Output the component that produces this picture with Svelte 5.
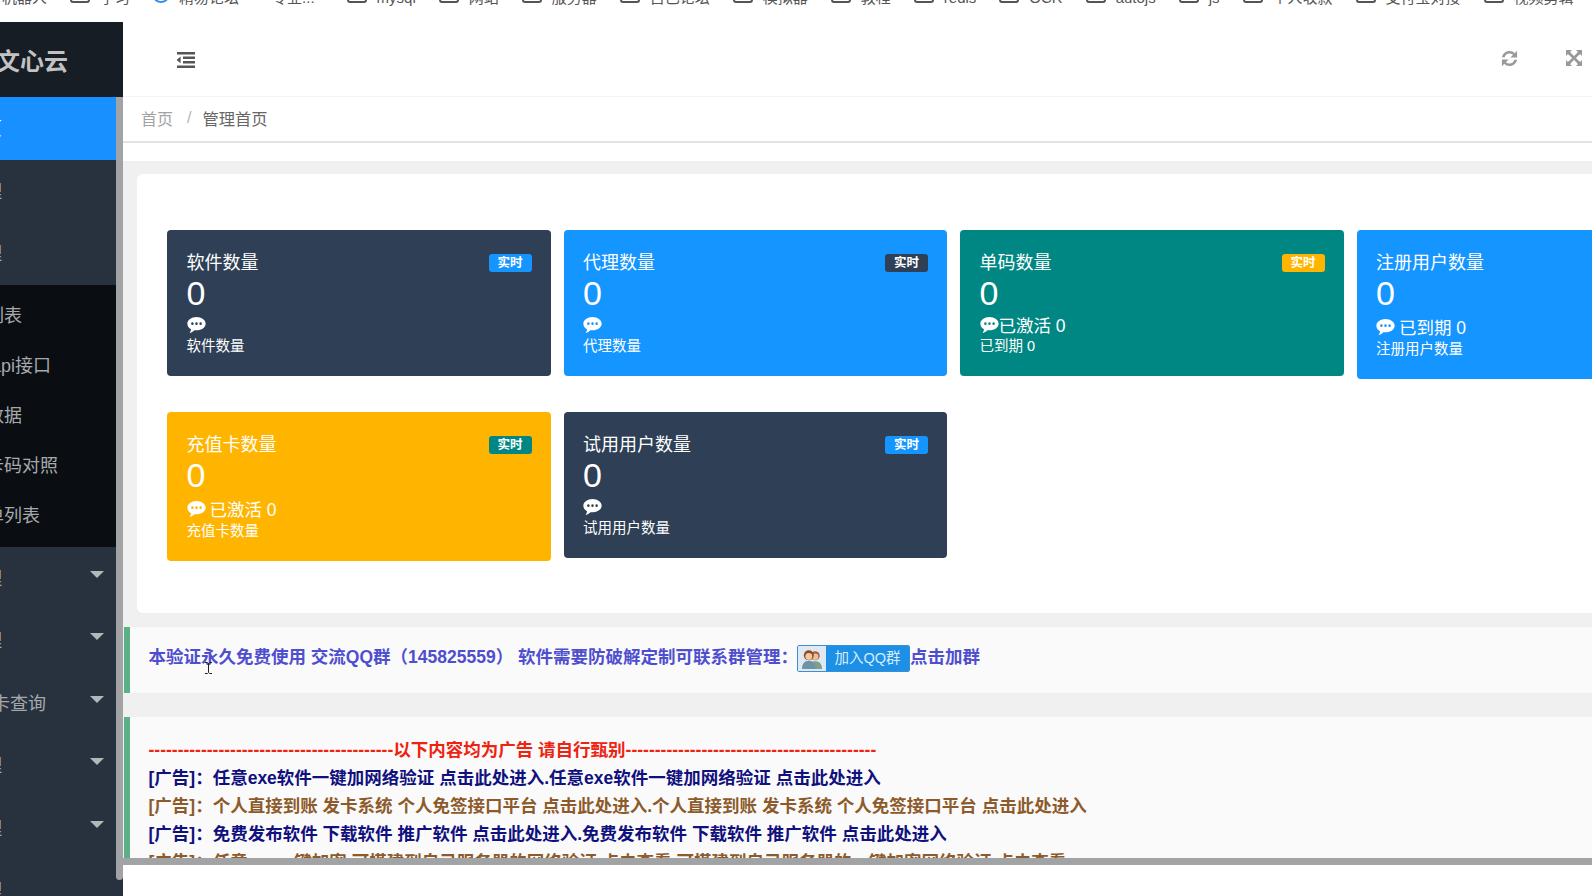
<script>
  // bookmarks strip along the top; kind: folder | site | blank
  const bookmarks = [
    { label: "机器人", kind: "none" },
    { label: "学习", kind: "folder" },
    { label: "精易论坛", kind: "site" },
    { label: "专业...", kind: "blank" },
    { label: "mysql", kind: "folder" },
    { label: "网站", kind: "folder" },
    { label: "服务器", kind: "folder" },
    { label: "自己论坛", kind: "folder" },
    { label: "模拟器", kind: "folder" },
    { label: "教程", kind: "folder" },
    { label: "redis", kind: "folder" },
    { label: "OCR", kind: "folder" },
    { label: "autojs", kind: "folder" },
    { label: "js", kind: "folder" },
    { label: "个人收款", kind: "folder" },
    { label: "支付宝对接", kind: "folder" },
    { label: "视频剪辑", kind: "folder" },
  ];

  const subItems = ["软件列表", "软件 api接口", "软件数据", "软件卡码对照", "黑名单列表"];

  const lowerItems = [
    { label: "单码管理", caret: true, x: -70 },
    { label: "充值管理", caret: true, x: -70 },
    { label: "充值卡查询", caret: true, x: -44 },
    { label: "用户管理", caret: true, x: -70 },
    { label: "代理管理", caret: true, x: -70 },
    { label: "系统管理", caret: false, x: -70 },
  ];

  const cards = [
    { title: "软件数量", tone: "navy", badge: "blue", msg: "", sub: "软件数量" },
    { title: "代理数量", tone: "blue", badge: "navy", msg: "", sub: "代理数量" },
    { title: "单码数量", tone: "teal", badge: "amber", msg: "已激活 0", sub: "已到期 0" },
    { title: "注册用户数量", tone: "blue", badge: "", msg: "已到期 0", sub: "注册用户数量", big: true },
    { title: "充值卡数量", tone: "amber", badge: "teal", msg: "已激活 0", sub: "充值卡数量", big: true },
    { title: "试用用户数量", tone: "navy", badge: "blue", msg: "", sub: "试用用户数量" },
  ];

  const ads = [
    { tone: "navy", text: "[广告]：任意exe软件一键加网络验证 点击此处进入.任意exe软件一键加网络验证 点击此处进入" },
    { tone: "brown", text: "[广告]：个人直接到账 发卡系统 个人免签接口平台 点击此处进入.个人直接到账 发卡系统 个人免签接口平台 点击此处进入" },
    { tone: "navy", text: "[广告]：免费发布软件 下载软件 推广软件 点击此处进入.免费发布软件 下载软件 推广软件 点击此处进入" },
    { tone: "brown", text: "[广告]：任意exe一键加密 可搭建到自己服务器的网络验证 点击查看 可搭建到自己服务器的一键加密网络验证 点击查看" },
  ];
</script>

<div class="page">
  <div class="bookmarks">
    {#each bookmarks as b}
      <div class="bookmark" class:spaced={b.kind === "blank"}>
        {#if b.kind === "folder"}
          <span class="folder"></span>
        {:else if b.kind === "site"}
          <span class="site"></span>
        {:else if b.kind === "blank"}
          <span class="blank"></span>
        {/if}
        <span>{b.label}</span>
      </div>
    {/each}
  </div>

  <div class="shell">
    <aside class="sidebar">
      <div class="logo"><span>文心云</span></div>
      <div class="nav-item active"><span class="label">管理首页</span></div>
      <div class="nav-item"><span class="label">软件管理</span></div>
      <div class="nav-item"><span class="label">软件管理</span></div>
      <div class="submenu">
        {#each subItems as s}
          <div class="sub-item"><span class="sub-label">{s}</span></div>
        {/each}
      </div>
      {#each lowerItems as item}
        <div class="nav-item">
          <span class="label" style="margin-left: {item.x}px">{item.label}</span>
          {#if item.caret}<span class="caret"></span>{/if}
        </div>
      {/each}
      <div class="thumb"></div>
    </aside>

    <main class="main">
      <div class="scroll">
        <header class="topbar">
          <svg class="dedent" viewBox="0 0 19 16" width="19" height="16" aria-hidden="true">
            <path fill="#555" d="M1 0h18v2.6H1zM7 4.4h12V7H7zM7 8.9h12v2.6H7zM1 13.4h18V16H1zM4.6 4.6v6.6L0.6 7.9z" />
          </svg>
          <span class="spacer"></span>
          <svg class="refresh" viewBox="1.5 1.5 13 13" width="17" height="17" aria-hidden="true">
            <path fill="#999" d="M8 2.2c1.6 0 3 .6 4 1.7L13.800 2.100V7.200H8.700l2-2c-.7-.7-1.700-1.100-2.700-1.100-1.800 0-3.300 1.200-3.700 2.900H2.200C2.700 4.200 5.100 2.200 8 2.200zM2.200 8.800h5.100l-2 2c.7.7 1.700 1.100 2.700 1.100 1.800 0 3.300-1.200 3.700-2.900h2.100c-.5 2.800-2.900 4.800-5.800 4.800-1.600 0-3-.6-4-1.700l-1.800 1.800z" />
          </svg>
          <svg class="expand" viewBox="0 0 16 16" width="16" height="16" aria-hidden="true">
            <path fill="#999" d="M0 0h6L4 2l1 1-2 2-1-1-2 2zM16 0v6l-2-2-1 1-2-2 1-1-2-2zM0 16v-6l2 2 1-1 2 2-1 1 2 2zM16 16h-6l2-2-1-1 2-2 1 1 2-2z" />
            <path stroke="#999" stroke-width="2.600" d="M3 3l10 10M13 3L3 13" />
          </svg>
        </header>

        <nav class="crumbs">
          <span class="crumb-link">首页</span>
          <span class="crumb-sep">/</span>
          <span class="crumb-now">管理首页</span>
        </nav>

        <div class="body">
          <section class="panel">
            <div class="grid">
              {#each cards as c}
                <article class="card {c.tone}">
                  <div class="title-row">
                    <span class="title">{c.title}</span>
                    {#if c.badge}<span class="badge {c.badge}">实时</span>{/if}
                  </div>
                  <div class="count">0</div>
                  <div class="msg" class:big={c.big}>
                    <svg class="bubble" viewBox="0 0 16 14" width="19" height="16" aria-hidden="true">
                      <path
                        fill="#fff"
                        fill-rule="evenodd"
                        d="M8 0c4.400 0 8 2.600 8 5.800s-3.600 5.800-8 5.800c-.6 0-1.200-.1-1.800-.1C5 12.600 3.400 13.600 1.900 14c.7-.9 1.200-1.900 1.300-3.300C1.300 9.600 0 7.800 0 5.800 0 2.600 3.600 0 8 0zM4.400 4.700a1.100 1.100 0 1 0 0 2.200 1.100 1.100 0 0 0 0-2.200zM8 4.700a1.100 1.100 0 1 0 0 2.200 1.100 1.100 0 0 0 0-2.200zM11.600 4.700a1.100 1.100 0 1 0 0 2.200 1.100 1.100 0 0 0 0-2.200z"
                      />
                    </svg>
                    {#if c.msg}<span class="msg-text" class:pad={c.big}>{c.msg}</span>{/if}
                  </div>
                  <div class="sub">{c.sub}</div>
                </article>
              {/each}
            </div>
          </section>

          <section class="notice first">
            <span>本验证永久免费使用 交流QQ群（145825559） 软件需要防破解定制可联系群管理：</span>
            <span class="qq-btn">
              <span class="qq-face">
                <svg viewBox="0 0 24 22" width="24" height="22" aria-hidden="true">
                  <circle cx="15.500" cy="7.500" r="5" fill="#a5603a" />
                  <circle cx="15.500" cy="8.500" r="3.500" fill="#eec09a" />
                  <path d="M8 22c0-6 3-8.500 7.500-8.500S23 16 23 22z" fill="#7f9f8f" />
                  <circle cx="8.500" cy="7" r="5.500" fill="#8a4a2a" />
                  <circle cx="8.500" cy="8.200" r="3.800" fill="#f2c8a2" />
                  <path d="M1 22c0-6 3-9 7.500-9s7.500 3 7.500 9z" fill="#6f93a5" />
                </svg>
              </span>
              <span class="qq-text">加入QQ群</span>
            </span>
            <span>点击加群</span>
            <svg class="ibeam" viewBox="0 0 7 12" width="7" height="12" aria-hidden="true">
              <path fill="none" stroke="#222" stroke-width="1" d="M0 .5h2.500l1 1 1-1H7M3.500 1.500v9M0 11.500h2.500l1-1 1 1H7" />
            </svg>
          </section>

          <section class="notice ads">
            <div class="ad red">{"-".repeat(42)}以下内容均为广告 请自行甄别{"-".repeat(43)}</div>
            {#each ads as ad}
              <div class="ad {ad.tone}">{ad.text}</div>
            {/each}
          </section>
        </div>
      </div>
      <div class="hbar"></div>
    </main>
  </div>
</div>

<style>
  :global(body) {
    margin: 0;
    overflow: hidden;
    background: #fff;
  }

  .page {
    width: 1592px;
    height: 896px;
    overflow: hidden;
    font-family: "Liberation Sans", "Noto Sans CJK SC", sans-serif;
  }

  .bookmarks {
    height: 22px;
    overflow: hidden;
    display: flex;
    align-items: flex-start;
    gap: 23px;
    padding-left: 2px;
    font-size: 15px;
    color: #555;
  }

  .bookmark {
    display: flex;
    align-items: flex-end;
    gap: 10px;
    margin-top: -13px;
    height: 22px;
    line-height: 22px;
    white-space: nowrap;
  }
  .bookmark.spaced { padding-right: 9px; }

  .folder {
    width: 20px;
    height: 14px;
    margin-bottom: 6px;
    box-sizing: border-box;
    border: 2px solid #555;
    border-radius: 3px;
  }
  .site {
    width: 16px;
    height: 14px;
    margin-bottom: 6px;
    box-sizing: border-box;
    border: 2px solid #3b8fe0;
    border-radius: 50%;
  }
  .blank { width: 0; }

  .shell {
    display: flex;
    height: 874px;
  }

  .sidebar {
    position: relative;
    flex: 0 0 122.5px;
    overflow: hidden;
    background: #27323e;
    color: #a6a9ac;
    font-size: 18px;
    white-space: nowrap;
  }

  .logo {
    height: 75px;
    display: flex;
    align-items: center;
    background: #171d24;
    color: #c2c2c2;
    font-size: 24px;
    font-weight: 700;
  }
  .logo span { margin-left: -4px; }

  .nav-item {
    height: 62.5px;
    display: flex;
    align-items: center;
    padding-right: 18.500px;
  }
  .nav-item.active {
    height: 63px;
    background: #1890ff;
    color: #fff;
  }
  .label {
    margin-left: -70px;
    margin-bottom: 3px;
  }

  .caret {
    margin-left: auto;
    margin-bottom: 8px;
    width: 0;
    height: 0;
    border-left: 7.500px solid transparent;
    border-right: 7.500px solid transparent;
    border-top: 7px solid #b4b7ba;
  }

  .submenu {
    padding: 4px 0 8px;
    background: #0a0e12;
  }
  .sub-item {
    height: 50px;
    display: flex;
    align-items: center;
  }
  .sub-label { margin-left: -50px; }

  .thumb {
    position: absolute;
    top: 75px;
    right: 0;
    width: 7px;
    height: 783px;
    border-radius: 0 0 4px 4px;
    background: #a2a3a5;
  }

  .main {
    flex: 1;
    min-width: 0;
    overflow: hidden;
  }

  .scroll {
    height: 836px;
    overflow: hidden;
  }

  .hbar {
    height: 7px;
    background: #a2a3a5;
  }

  .topbar {
    height: 75px;
    box-sizing: border-box;
    display: flex;
    align-items: center;
    padding: 0 10px 0 53.500px;
    border-bottom: 1px solid #f3f3f3;
  }
  .dedent { margin-top: 2px; }
  .spacer { flex: 1; }
  .refresh { margin: 0 48px 2px 0; }
  .expand { margin-bottom: 2px; }

  .crumbs {
    height: 46px;
    display: flex;
    align-items: center;
    box-sizing: border-box;
    padding: 0 0 2px 18.500px;
    font-size: 16px;
    border-bottom: 2px solid #e2e2e2;
  }
  .crumb-link { color: #a3a3a3; }
  .crumb-sep { margin: 0 11px 0 14px; color: #b5b5b5; }
  .crumb-now { color: #666; font-size: 16.300px; }

  .body {
    margin-top: 18px;
    padding-top: 13px;
    background: #f0f0f0;
  }

  .panel {
    margin-left: 14.500px;
    padding: 56px 0 52px 30px;
    border-radius: 6px 0 0 6px;
    background: #fff;
  }

  .grid {
    display: grid;
    grid-template-columns: repeat(4, 383.500px);
    column-gap: 13px;
    row-gap: 33px;
    align-items: start;
  }

  .card {
    box-sizing: border-box;
    padding: 21px 19px 21px 19.500px;
    border-radius: 4px;
    color: #fff;
  }
  .card.navy { background: #2e3f56; }
  .card.blue { background: #1595ff; }
  .card.teal { background: #008783; }
  .card.amber { background: #ffb500; }

  .title-row {
    height: 24px;
    display: flex;
    align-items: center;
    justify-content: space-between;
  }
  .title {
    font-size: 18px;
    line-height: 24px;
  }

  .badge {
    width: 43px;
    height: 18px;
    border-radius: 3px;
    font-size: 12.500px;
    font-weight: 700;
    line-height: 18px;
    text-align: center;
  }
  .badge.navy { background: #2e3f56; }
  .badge.blue { background: #1595ff; }
  .badge.teal { background: #008783; }
  .badge.amber { background: #ffb500; }

  .count {
    height: 37px;
    font-size: 34px;
    line-height: 37px;
  }

  .msg {
    height: 25px;
    display: flex;
    align-items: center;
    font-size: 17.500px;
  }
  .msg.big {
    height: 28px;
    padding-top: 1px;
    box-sizing: border-box;
  }
  .msg-text.pad { margin-left: 4px; }

  .sub {
    height: 18px;
    font-size: 14.500px;
    line-height: 18px;
  }

  .notice {
    position: relative;
    margin-left: 1px;
    padding-left: 19px;
    border-left: 6px solid #5cb085;
    background: #fafafa;
    font-size: 17.500px;
    font-weight: 700;
    white-space: nowrap;
  }
  .notice.first {
    height: 65.500px;
    box-sizing: border-box;
    margin-top: 14px;
    padding-bottom: 8px;
    display: flex;
    align-items: center;
    color: #4e4ecf;
  }
  .notice.ads {
    margin-top: 24.500px;
    height: 142px;
    padding-top: 19px;
    box-sizing: border-box;
    overflow: hidden;
  }

  .qq-btn {
    display: flex;
    width: 113px;
    height: 27px;
    margin: 6px 0 0 -1px;
    box-sizing: border-box;
    border: 1px solid #3b8fd0;
    border-radius: 2px;
    overflow: hidden;
    font-size: 14.500px;
    font-weight: 400;
  }
  .qq-face {
    flex: 0 0 28px;
    display: flex;
    align-items: center;
    justify-content: center;
    background: #dfe9f3;
  }
  .qq-face svg { width: 22px; height: 20px; }
  .qq-text {
    flex: 1;
    line-height: 25px;
    text-align: center;
    color: #d8ecfb;
    background: #1c90e6;
  }

  .ibeam {
    position: absolute;
    left: 75px;
    top: 35px;
  }

  .ad {
    height: 28px;
    line-height: 28px;
  }
  .ad.red { color: #ee2211; }
  .ad.navy { color: #10107e; }
  .ad.brown { color: #8d5a2b; }
</style>
